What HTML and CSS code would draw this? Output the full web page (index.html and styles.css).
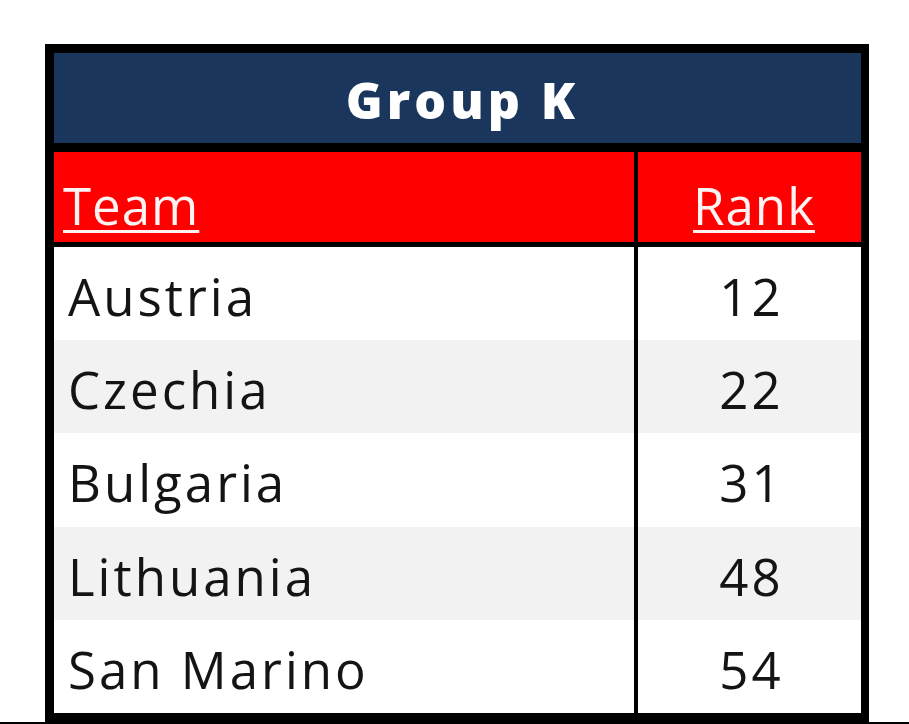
FILE: index.html
```html
<!DOCTYPE html>
<html lang="en">
<head>
<meta charset="utf-8">
<title>Group K</title>
<link rel="stylesheet" href="styles.css">
</head>
<body>
<div class="page">
  <div class="group">
    <div class="title">Group K</div>
    <div class="row head">
      <div class="cell team"><span class="ul">Team</span></div>
      <div class="cell rank"><span class="ul">Rank</span></div>
    </div>
    <div class="row">
      <div class="cell team">Austria</div>
      <div class="cell rank">12</div>
    </div>
    <div class="row alt">
      <div class="cell team">Czechia</div>
      <div class="cell rank">22</div>
    </div>
    <div class="row">
      <div class="cell team">Bulgaria</div>
      <div class="cell rank">31</div>
    </div>
    <div class="row alt">
      <div class="cell team">Lithuania</div>
      <div class="cell rank">48</div>
    </div>
    <div class="row">
      <div class="cell team">San Marino</div>
      <div class="cell rank">54</div>
    </div>
  </div>
  <div class="edge"></div>
</div>
</body>
</html>
```
FILE: styles.css
```css
html, body {
  margin: 0;
  padding: 0;
  background: #ffffff;
}
body {
  font-family: "Open Sans", Lato, "Liberation Sans", sans-serif;
  color: #141414;
}
.page {
  width: 909px;
  height: 724px;
  padding-top: 44px;
  box-sizing: border-box;
  display: flex;
  flex-direction: column;
}
.group {
  margin-left: 45px;
  width: 824px;
  box-sizing: border-box;
  border-style: solid;
  border-color: #000000;
  border-width: 9px 8px 9px 9px;
  display: flex;
  flex-direction: column;
}
.title {
  height: 86px;
  padding-top: 4px;
  background: #1b365c;
  border-bottom: 9px solid #000000;
  color: #ffffff;
  font-weight: 800;
  font-size: 50px;
  letter-spacing: 4px;
  display: flex;
  align-items: center;
  justify-content: center;
  padding-left: 10px;
}
.row {
  display: grid;
  grid-template-columns: 584px 223px;
  height: 93px;
  background: #ffffff;
}
.row.alt {
  background: #f2f2f2;
}
.row:nth-child(5) {
  height: 94px;
}
.row.head {
  height: 90px;
  background: #ff0000;
  border-bottom: 5px solid #000000;
  color: #fff2f2;
}
.cell {
  display: flex;
  align-items: center;
  font-size: 51px;
  letter-spacing: 3px;
  padding-top: 4px;
  box-sizing: border-box;
}
.cell.team {
  border-right: 4px solid #000000;
  padding-left: 14px;
}
.cell.rank {
  justify-content: center;
  padding-left: 4px;
}
.head .cell {
  padding-top: 16px;
  font-size: 51px;
  letter-spacing: 1px;
}
.head .cell.team {
  padding-left: 9px;
}
.head .cell.rank {
  padding-left: 9px;
}
.ul {
  text-decoration: underline;
  text-decoration-thickness: 3px;
  text-underline-offset: 5px;
}
.edge {
  height: 2px;
  background: #000000;
}
```
